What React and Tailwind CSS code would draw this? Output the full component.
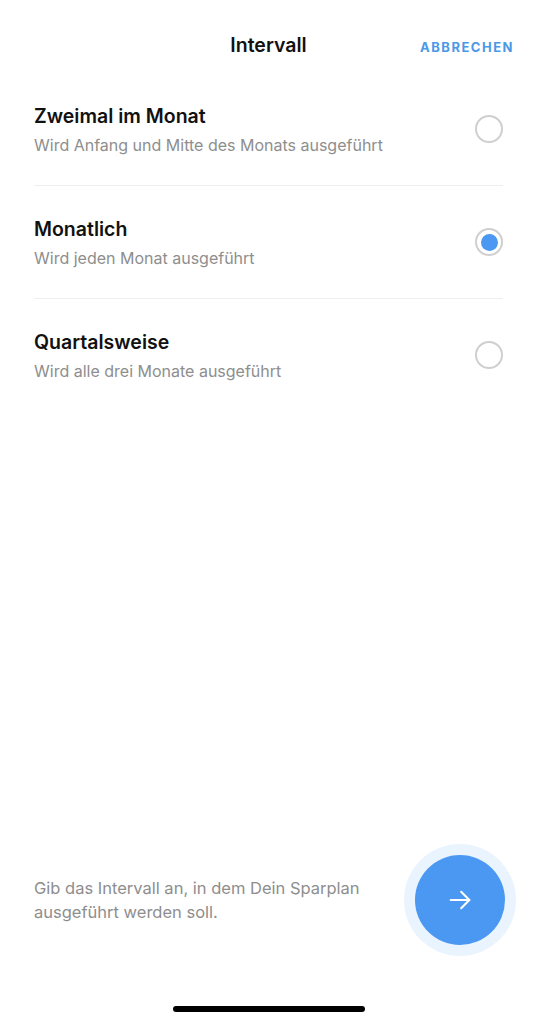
import React, { useState } from 'react';

const options = [
  { id: 'twice', title: 'Zweimal im Monat', desc: 'Wird Anfang und Mitte des Monats ausgeführt' },
  { id: 'monthly', title: 'Monatlich', desc: 'Wird jeden Monat ausgeführt' },
  { id: 'quarterly', title: 'Quartalsweise', desc: 'Wird alle drei Monate ausgeführt' },
];

function Radio({ checked }) {
  return (
    <div className="w-[28px] h-[28px] rounded-full border-2 border-[#cfcfcf] flex items-center justify-center shrink-0">
      {checked && <div className="w-[17px] h-[17px] rounded-full bg-[#4a98f2]" />}
    </div>
  );
}

export default function App() {
  const [selected, setSelected] = useState('monthly');

  return (
    <div className="h-[1024px] w-full bg-white flex flex-col font-['Inter',sans-serif] text-[#111]">
      {/* header */}
      <div className="relative h-[73px] pt-[33px]">
        <div className="text-center text-[19.5px] leading-[24px] font-semibold">Intervall</div>
        <button className="absolute right-[23px] top-[37px] text-[13px] leading-[20px] font-bold tracking-[1.5px] text-[#4a98e6]">
          ABBRECHEN
        </button>
      </div>

      <div className="px-[34px]">
        {options.map((o, i) => (
          <div
            key={o.id}
            onClick={() => setSelected(o.id)}
            className={`flex items-center justify-between py-[30px] ${i < options.length - 1 ? 'border-b border-[#eeeeee]' : ''}`}
          >
            <div>
              <div className="text-[19.5px] leading-[26px] font-semibold">{o.title}</div>
              <div className="mt-[6px] text-[16px] leading-[20px] text-[#8e8e8e]">{o.desc}</div>
            </div>
            <Radio checked={selected === o.id} />
          </div>
        ))}
      </div>

      <div className="flex-1" />

      <div className="flex items-center justify-between pl-[34px] pr-[21px]">
        <p className="text-[16.5px] leading-[24px] text-[#8e8e8e] w-[340px]">
          Gib das Intervall an, in dem Dein Sparplan ausgeführt werden soll.
        </p>
        <div className="w-[112px] h-[112px] rounded-full bg-[#e9f4fe] flex items-center justify-center">
          <button className="w-[90px] h-[90px] rounded-full bg-[#4a98f2] flex items-center justify-center">
            <svg width="28" height="28" viewBox="0 0 24 24" fill="none" stroke="white" strokeWidth="1.8" strokeLinecap="round" strokeLinejoin="round">
              <path d="M4 12h16" />
              <path d="M13 5l7 7-7 7" />
            </svg>
          </button>
        </div>
      </div>

      <div className="h-[68px] pt-[50px] flex justify-center">
        <div className="w-[192px] h-[6px] rounded-full bg-black" />
      </div>
    </div>
  );
}
